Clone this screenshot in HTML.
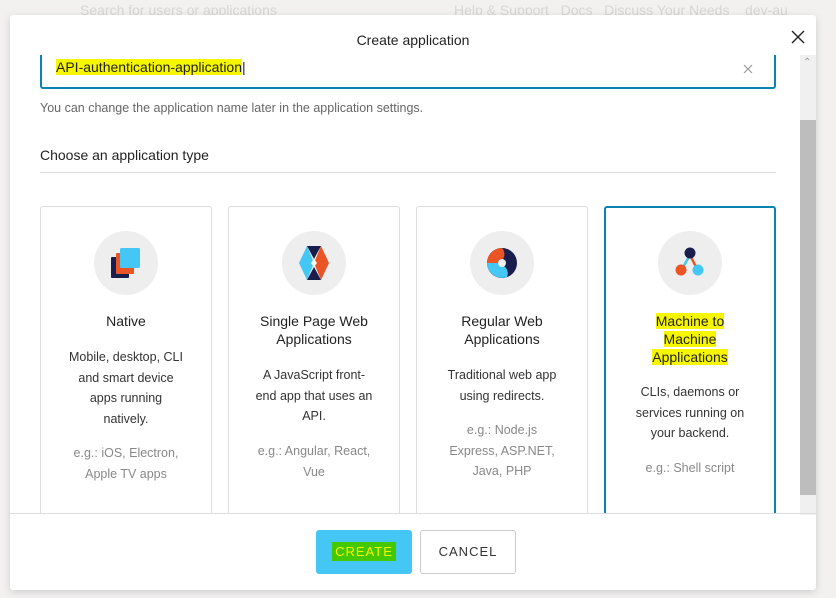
<!DOCTYPE html>
<html><head><style>
*{margin:0;padding:0;box-sizing:border-box}
body{width:836px;height:598px;overflow:hidden;background:#f2f1f0;font-family:"Liberation Sans",sans-serif;position:relative;color:#333}
.bg{position:absolute;color:#d8d6d4;font-size:14px;white-space:nowrap}
.modal{position:absolute;left:10px;top:15px;width:806px;height:575px;background:#fff;border-radius:3px;box-shadow:0 2px 8px rgba(0,0,0,.15)}
.t{position:absolute;left:0;width:806px;top:17px;text-align:center;font-size:14px;color:#222}
.abs{position:absolute}
.card{position:absolute;top:206px;width:172px;height:320px;border:1px solid #ddd;border-radius:3px;text-align:center}
.card.sel{border:2px solid #0a84ae}
.ic{position:absolute;left:53px;top:24px;width:64px;height:64px;border-radius:50%;background:#eeeeee}
.sel .ic{left:52px;top:23px}
.card h4{position:absolute;left:0;right:0;top:105px;font-size:14px;font-weight:normal;color:#222;line-height:18px}
.card p{position:absolute;left:0;right:0;font-size:12.5px;line-height:20.5px;color:#333;white-space:nowrap}
.card .e{color:#888}
.hl{background:#f6f600}
</style></head><body>
<div class="bg" style="left:80px;top:2px">Search for users or applications</div>
<div class="bg" style="left:454px;top:2px">Help &amp; Support&nbsp;&nbsp;&nbsp;Docs&nbsp;&nbsp;&nbsp;Discuss Your Needs&nbsp;&nbsp;&nbsp;&nbsp;dev-au</div>
<div class="modal">
<div class="t">Create application</div>
<svg class="abs" style="left:781px;top:15px" width="14" height="14" viewBox="0 0 14 14"><path d="M1 1L13 13M13 1L1 13" stroke="#222" stroke-width="1.4"/></svg>
<div class="abs" style="left:0;top:40px;width:790px;height:458px;overflow:hidden">
 <div class="abs" style="left:30px;top:-10px;width:736px;height:44px;border:2px solid #0a84ae;border-top:none;border-radius:0 0 3px 3px"></div>
 <div class="abs" style="left:46px;top:4px;font-size:14px;color:#222"><span class="hl">API-authentication-application</span>|</div>
 <svg class="abs" style="left:733px;top:9px" width="10" height="10" viewBox="0 0 10 10"><path d="M1 1L9 9M9 1L1 9" stroke="#999" stroke-width="1.2"/></svg>
 <div class="abs" style="left:30px;top:46px;font-size:12.5px;color:#666">You can change the application name later in the application settings.</div>
 <div class="abs" style="left:30px;top:92px;font-size:14px;color:#222">Choose an application type</div>
 <div class="abs" style="left:30px;top:117px;width:736px;height:1px;background:#ddd"></div>
</div>
<div class="abs" style="left:0;top:40px;width:790px;height:458px;overflow:hidden">
 <div style="position:absolute;left:-10px;top:-55px">
 <div class="card" style="left:40px"><div class="ic"><svg width="64" height="64" viewBox="0 0 64 64"><rect x="17" y="26" width="18" height="21" rx="1" fill="#1a1e4c"/><rect x="22" y="22" width="18" height="21" rx="1" fill="#eb5424"/><rect x="26" y="17" width="20" height="20" rx="1.5" fill="#44c7f4"/></svg></div>
  <h4>Native</h4><p style="top:140px">Mobile, desktop, CLI<br>and smart device<br>apps running<br>natively.</p><p class="e" style="top:236px">e.g.: iOS, Electron,<br>Apple TV apps</p></div>
 <div class="card" style="left:228px"><div class="ic"><svg width="64" height="64" viewBox="0 0 64 64"><polygon points="25,15 32,32 25,49 17,32" fill="#44c7f4"/><polygon points="39,15 47,32 39,49 32,32" fill="#eb5424"/><polygon points="25,15 39,15 32,28" fill="#1a1e4c"/><polygon points="25,49 39,49 32,36" fill="#1a1e4c"/><polygon points="32,28 35,32 32,36 29,32" fill="#fff"/></svg></div>
  <h4>Single Page Web<br>Applications</h4><p style="top:158px">A JavaScript front-<br>end app that uses an<br>API.</p><p class="e" style="top:234px">e.g.: Angular, React,<br>Vue</p></div>
 <div class="card" style="left:416px"><div class="ic"><svg width="64" height="64" viewBox="0 0 64 64"><circle cx="32" cy="32" r="15" fill="#1a1e4c"/><path d="M17 32a15 15 0 0 1 15-15a9 9 0 0 1 1 11a4 4 0 0 0-5 4z" fill="#eb5424"/><path d="M17 32a15 15 0 0 0 20 14a9 9 0 0 0-3-11a4 4 0 0 1-6-3z" fill="#44c7f4"/><circle cx="32" cy="32" r="4" fill="#eee"/></svg></div>
  <h4>Regular Web<br>Applications</h4><p style="top:158px">Traditional web app<br>using redirects.</p><p class="e" style="top:213px">e.g.: Node.js<br>Express, ASP.NET,<br>Java, PHP</p></div>
 <div class="card sel" style="left:604px"><div class="ic"><svg width="64" height="64" viewBox="0 0 64 64"><path d="M32 24L24 38" stroke="#44c7f4" stroke-width="2.5"/><path d="M32 24L39 38" stroke="#eb5424" stroke-width="2.5"/><circle cx="32" cy="22" r="5.5" fill="#1a1e4c"/><circle cx="23" cy="39" r="5.5" fill="#eb5424"/><circle cx="40" cy="39" r="5.5" fill="#44c7f4"/></svg></div>
  <h4 style="top:104px"><span class="hl">Machine to<br>Machine<br>Applications</span></h4><p style="top:174px">CLIs, daemons or<br>services running on<br>your backend.</p><p class="e" style="top:250px">e.g.: Shell script</p></div>
 </div>
</div>
<div class="abs" style="left:790px;top:40px;width:16px;height:460px;background:#f0f0f0"></div>
<div class="abs" style="left:790px;top:105px;width:16px;height:375px;background:#bdbdbd"></div>
<div class="abs" style="left:793px;top:42px;font-size:10px;color:#999">⌃</div>
<div class="abs" style="left:0;top:498px;width:806px;height:1px;background:#ddd"></div>
<div class="abs" style="left:306px;top:515px;width:96px;height:44px;background:#44c7f4;border-radius:3px;text-align:center;line-height:44px;font-size:13px;letter-spacing:1px"><span style="background:#44c800;color:#f6f600;padding:2px 3px">CREATE</span></div>
<div class="abs" style="left:410px;top:515px;width:96px;height:44px;border:1px solid #ccc;border-radius:3px;text-align:center;line-height:42px;font-size:13px;letter-spacing:1px;color:#333">CANCEL</div>
</div>
</body></html>
